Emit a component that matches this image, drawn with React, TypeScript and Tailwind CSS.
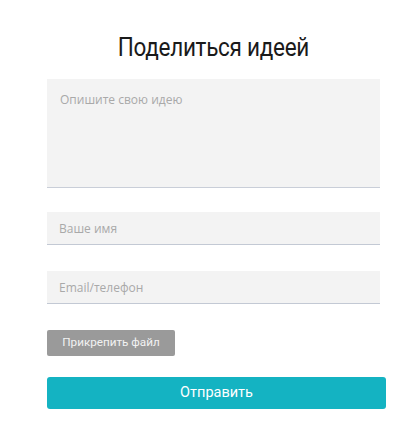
import React from 'react'

export default function App() {
  return (
    <div className="w-[400px] h-[435px] bg-white">
      <div className="pt-[33px] pl-[47px] pr-[14px]">
        {/* Title — condensed look */}
        <h2 className="text-center pr-[6px] font-['Roboto',sans-serif] text-[25px] leading-[30px] text-[#1a1a1a]">
          <span className="inline-block scale-x-[0.9] tracking-[-0.3px]">Поделиться идеей</span>
        </h2>

        <form className="mt-[16px] flex flex-col" onSubmit={(e) => e.preventDefault()}>
          {/* Idea */}
          <textarea
            placeholder="Опишите свою идею"
            className="w-[333px] h-[109px] resize-none bg-[#f3f3f3] border-b-[1.5px] border-[#c9ced8] px-[13px] py-[12px] font-['Open_Sans',sans-serif] text-[12px] leading-[18px] text-[#333] placeholder:text-[#a9a9a9] outline-none"
          />

          {/* Name */}
          <input
            placeholder="Ваше имя"
            className="mt-[24px] w-[333px] h-[33px] bg-[#f3f3f3] border-b-[1.5px] border-[#c3c9d4] px-[12px] font-['Open_Sans',sans-serif] text-[12px] text-[#333] placeholder:text-[#a9a9a9] outline-none"
          />

          {/* Contact */}
          <input
            placeholder="Email/телефон"
            className="mt-[26px] w-[333px] h-[33px] bg-[#f3f3f3] border-b-[1.5px] border-[#c3c9d4] px-[12px] font-['Open_Sans',sans-serif] text-[12px] text-[#333] placeholder:text-[#a9a9a9] outline-none"
          />

          {/* Attach */}
          <button
            type="button"
            className="mt-[26px] w-[128px] h-[26px] rounded-[2px] bg-[#9a9a9a] font-['Roboto',sans-serif] text-[11.7px] text-[#f2f2f2]"
          >
            Прикрепить файл
          </button>

          {/* Submit */}
          <button
            type="submit"
            className="mt-[21px] w-[339px] h-[32px] rounded-[3px] bg-[#14b3c2] font-['Roboto',sans-serif] text-[14.5px] text-white"
          >
            Отправить
          </button>
        </form>
      </div>
    </div>
  )
}
